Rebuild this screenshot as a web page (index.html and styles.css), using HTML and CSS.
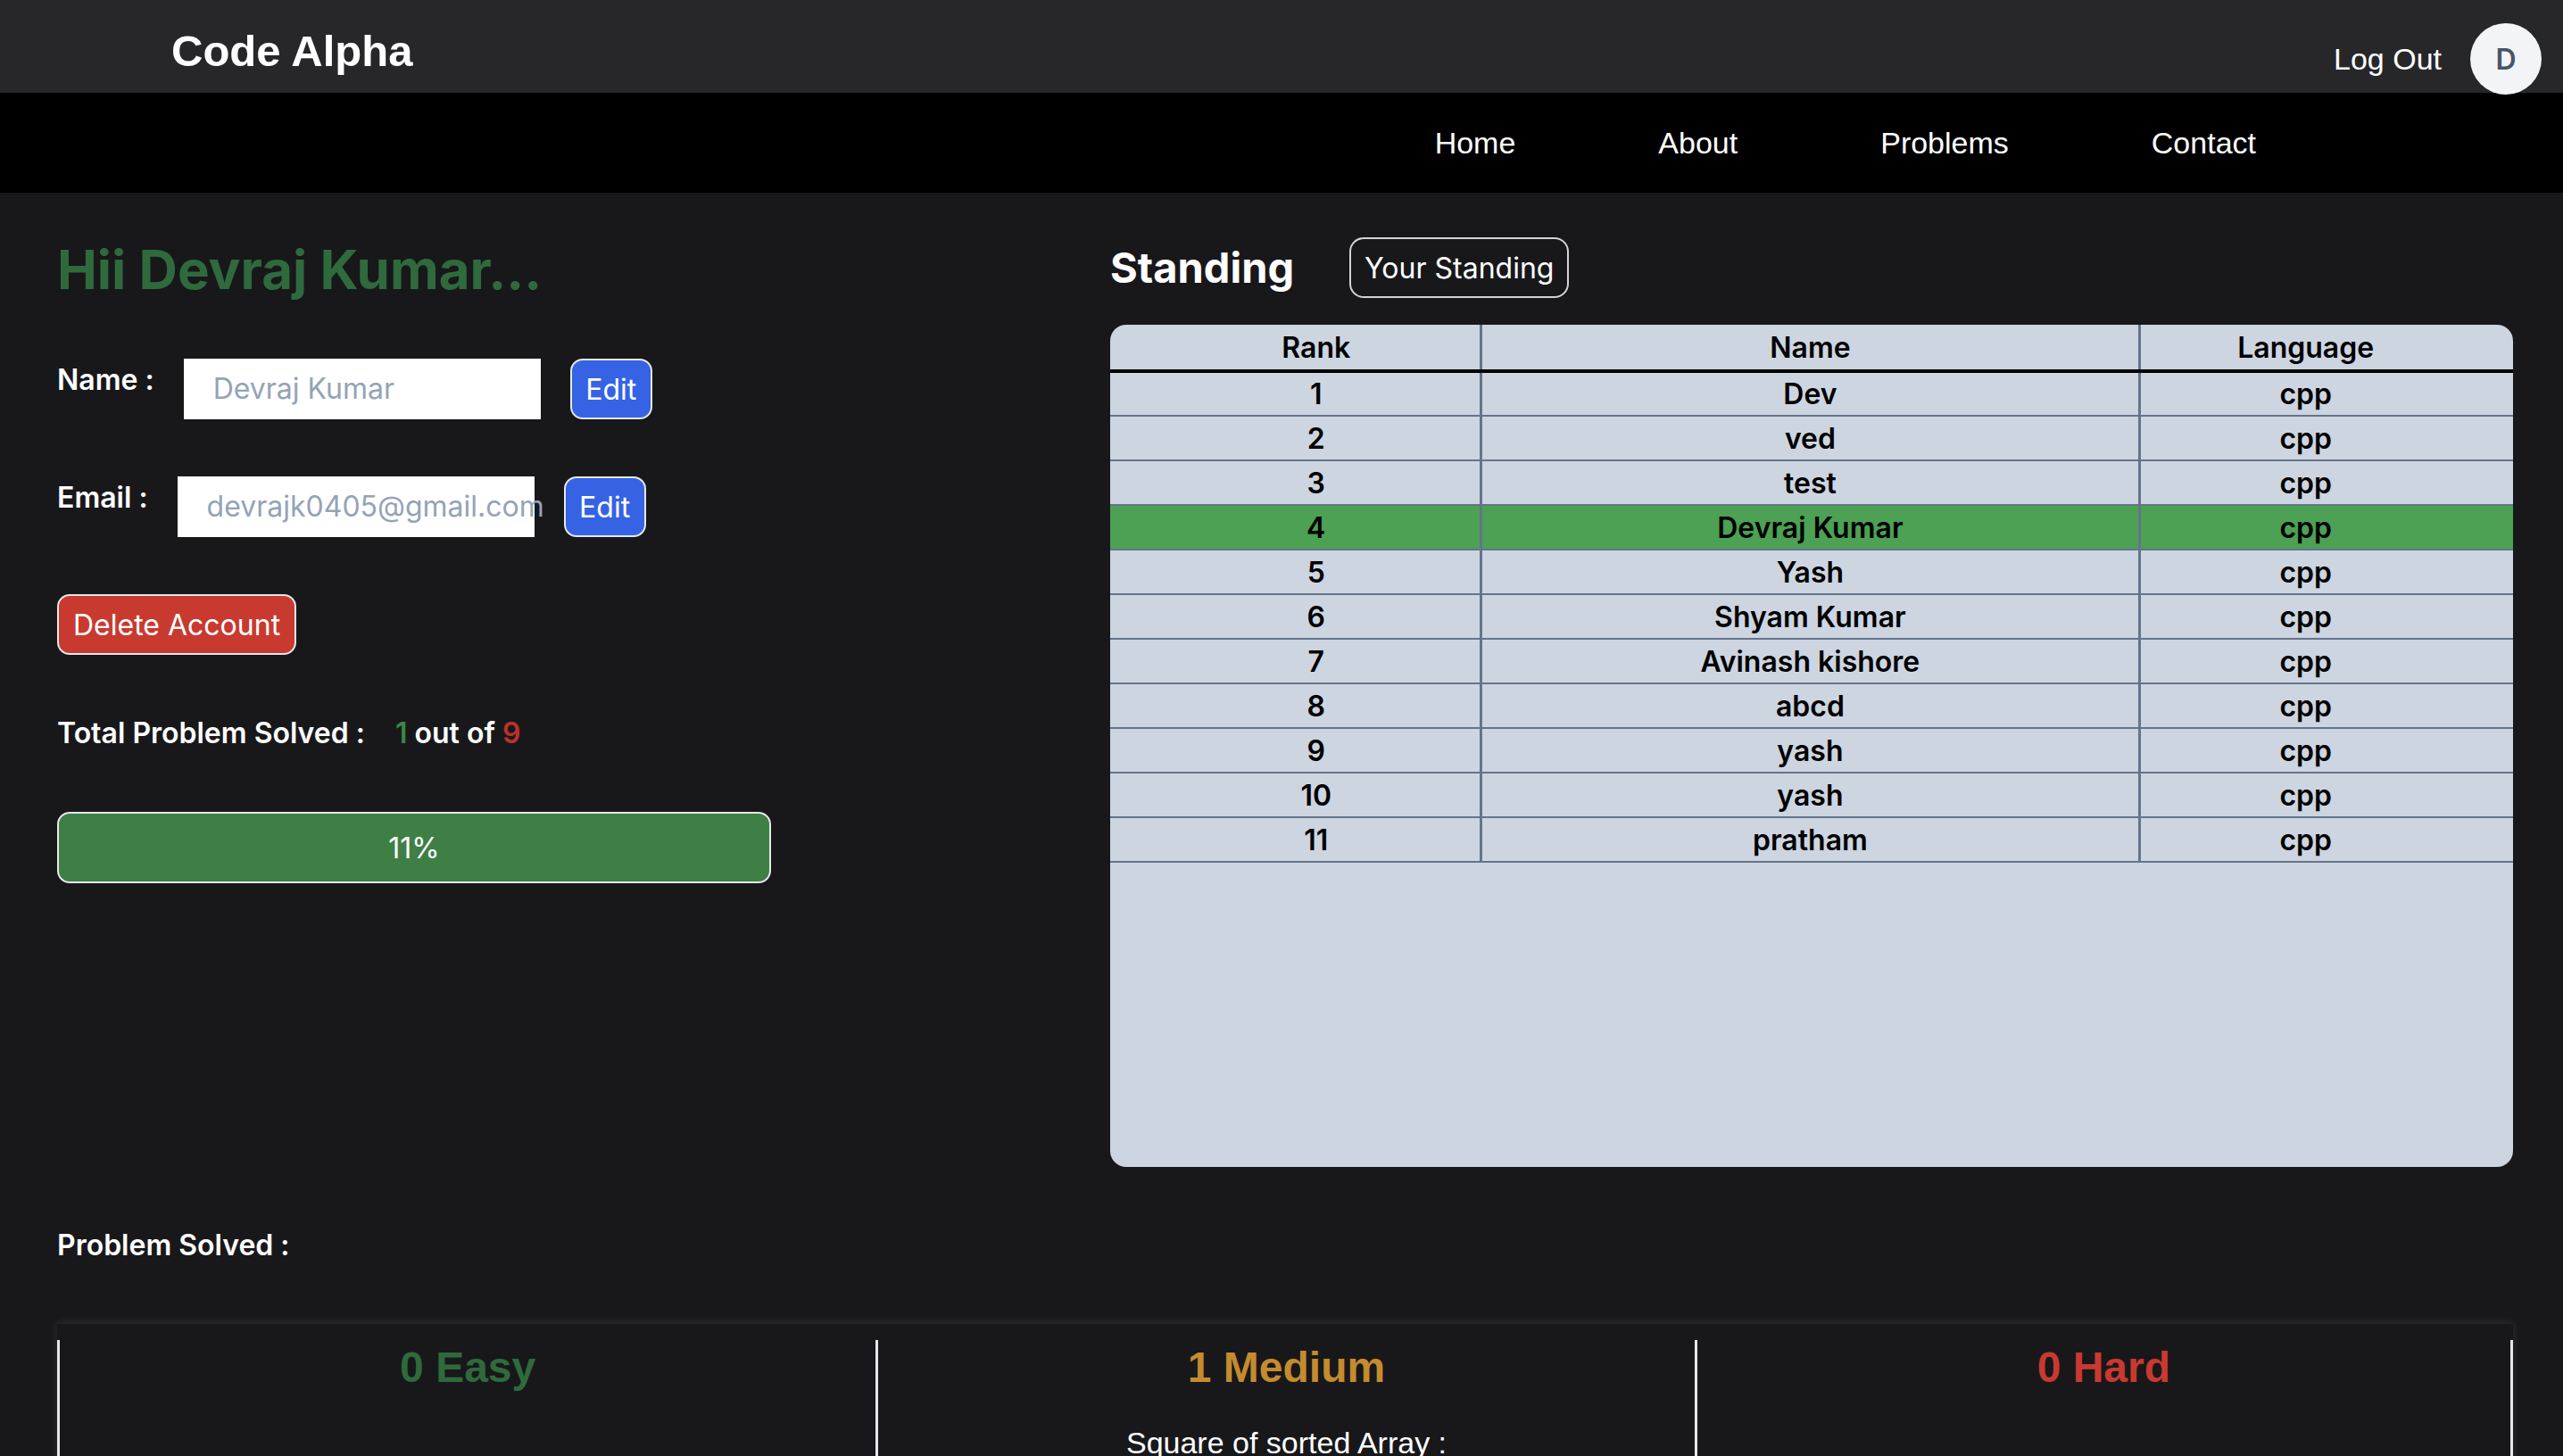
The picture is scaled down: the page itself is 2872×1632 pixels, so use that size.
FILE: index.html
```html
<!DOCTYPE html>
<html lang="en">
<head>
<meta charset="utf-8">
<title>Code Alpha - Profile</title>
<link rel="stylesheet" href="styles.css">
</head>
<body>
<header class="topbar">
  <div class="logo">Code Alpha</div>
  <div class="account">
    <span class="logout">Log Out</span>
    <span class="avatar">D</span>
  </div>
</header>
<nav class="navbar">
  <ul class="nav-list">
    <li>Home</li>
    <li>About</li>
    <li>Problems</li>
    <li>Contact</li>
  </ul>
</nav>
<main class="main">
  <section class="top">
    <div class="profile">
      <h1 class="greet">Hii Devraj Kumar...</h1>
      <div class="field-row">
        <span class="label">Name :</span>
        <div class="field">Devraj Kumar</div>
        <button class="btn-edit">Edit</button>
      </div>
      <div class="field-row">
        <span class="label">Email :</span>
        <div class="field">devrajk0405@gmail.com</div>
        <button class="btn-edit">Edit</button>
      </div>
      <div><button class="btn-delete">Delete Account</button></div>
      <div class="total"><span class="total-label">Total Problem Solved :</span><span class="num-green">1</span> out of <span class="num-red">9</span></div>
      <div class="progress">11%</div>
    </div>
    <div class="standing">
      <div class="standing-head">
        <h2 class="standing-title">Standing</h2>
        <button class="btn-outline">Your Standing</button>
      </div>
      <div class="table-box">
        <table class="rank-table">
          <thead>
            <tr><th class="c1">Rank</th><th class="c2">Name</th><th class="c3">Language</th></tr>
          </thead>
          <tbody>
            <tr><td>1</td><td>Dev</td><td>cpp</td></tr>
            <tr><td>2</td><td>ved</td><td>cpp</td></tr>
            <tr><td>3</td><td>test</td><td>cpp</td></tr>
            <tr class="me"><td>4</td><td>Devraj Kumar</td><td>cpp</td></tr>
            <tr><td>5</td><td>Yash</td><td>cpp</td></tr>
            <tr><td>6</td><td>Shyam Kumar</td><td>cpp</td></tr>
            <tr><td>7</td><td>Avinash kishore</td><td>cpp</td></tr>
            <tr><td>8</td><td>abcd</td><td>cpp</td></tr>
            <tr><td>9</td><td>yash</td><td>cpp</td></tr>
            <tr><td>10</td><td>yash</td><td>cpp</td></tr>
            <tr><td>11</td><td>pratham</td><td>cpp</td></tr>
          </tbody>
        </table>
      </div>
    </div>
  </section>
  <section class="solved">
    <div class="solved-title">Problem Solved :</div>
    <div class="cards">
      <div class="card">
        <div class="card-title easy">0 Easy</div>
      </div>
      <div class="card">
        <div class="card-title medium">1 Medium</div>
        <div class="card-item">Square of sorted Array :</div>
      </div>
      <div class="card last">
        <div class="card-title hard">0 Hard</div>
      </div>
    </div>
  </section>
</main>
</body>
</html>
```
FILE: styles.css
```css
* { box-sizing: border-box; }
html, body { margin: 0; padding: 0; }
body {
  background: #18181b;
  color: #ffffff;
  font-family: Inter, "Noto Sans", sans-serif;
  overflow: hidden;
  height: 1632px;
}

/* top header */
.topbar {
  height: 104px;
  background: #27272a;
  display: flex;
  justify-content: space-between;
  align-items: flex-start;
}
.logo {
  font-family: "Liberation Sans", Arial, sans-serif;
  font-weight: 700;
  font-size: 49px;
  line-height: 56px;
  padding: 29px 0 0 192px;
}
.account {
  display: flex;
  align-items: center;
  gap: 32px;
  padding: 26px 24px 0 0;
}
.logout {
  font-family: "Liberation Sans", Arial, sans-serif;
  font-size: 34px;
}
.avatar {
  width: 80px;
  height: 80px;
  border-radius: 50%;
  background: #f3f4f6;
  color: #475569;
  display: flex;
  align-items: center;
  justify-content: center;
  font-size: 32px;
  font-weight: 600;
  font-family: Inter, sans-serif;
}

/* navigation */
.navbar {
  height: 112px;
  background: #000000;
  display: flex;
  align-items: center;
  justify-content: flex-end;
  padding-right: 344px;
}
.nav-list {
  list-style: none;
  margin: 0;
  padding: 0;
  display: flex;
  gap: 160px;
  font-family: "Liberation Sans", Arial, sans-serif;
  font-size: 34px;
}

/* main */
.main {
  padding: 50px 56px 0 64px;
}
.top {
  display: grid;
  grid-template-columns: 1180px 1fr;
}
.profile {
  display: flex;
  flex-direction: column;
  gap: 64px;
}
.greet {
  margin: 0;
  font-size: 60px;
  line-height: 72px;
  font-weight: 700;
  color: #2f6a3d;
}
.field-row {
  display: flex;
  align-items: flex-start;
}
.label {
  font-size: 32px;
  font-weight: 600;
  line-height: 48px;
  margin-right: 33px;
}
.field {
  width: 400px;
  height: 68px;
  background: #ffffff;
  color: #94a3b8;
  font-size: 32px;
  line-height: 68px;
  padding-left: 33px;
  white-space: nowrap;
}
.btn-edit {
  margin-left: 33px;
  width: 92px;
  height: 68px;
  background: #3563e4;
  color: #ffffff;
  border: 2px solid #e5e7eb;
  border-radius: 14px;
  font-family: Inter, sans-serif;
  font-size: 32px;
  padding: 0;
}
.btn-delete {
  height: 68px;
  padding: 0 16px;
  background: #c83a30;
  color: #ffffff;
  border: 2px solid #e5e7eb;
  border-radius: 14px;
  font-family: Inter, sans-serif;
  font-size: 32px;
}
.total {
  font-size: 32px;
  font-weight: 600;
  line-height: 48px;
}
.total-label { margin-right: 34px; }
.num-green { color: #3d8546; }
.num-red { color: #b8322b; }
.progress {
  width: 800px;
  height: 80px;
  background: #3e7f46;
  border: 2px solid #e5e7eb;
  border-radius: 14px;
  display: flex;
  align-items: center;
  justify-content: center;
  font-size: 32px;
}

/* standing */
.standing-head {
  display: flex;
  align-items: center;
  height: 68px;
}
.standing-title {
  margin: 0;
  font-size: 47px;
  font-weight: 700;
  line-height: 64px;
}
.btn-outline {
  margin-left: 62px;
  height: 68px;
  padding: 0 15px;
  background: transparent;
  color: #ffffff;
  border: 2px solid #d4d4d8;
  border-radius: 16px;
  font-family: Inter, sans-serif;
  font-size: 32px;
}
.table-box {
  margin-top: 30px;
  height: 944px;
  background: #cdd5e1;
  border-radius: 18px;
  overflow: hidden;
}
.rank-table {
  width: 100%;
  border-collapse: collapse;
  color: #000000;
  font-size: 32px;
  font-weight: 600;
  text-align: center;
}
.rank-table th {
  height: 52px;
  font-weight: 600;
  border-bottom: 4px solid #000000;
  padding: 0;
}
.rank-table td {
  height: 50px;
  border-bottom: 2px solid #64748b;
  padding: 0;
}
.rank-table th + th,
.rank-table td + td {
  border-left: 3px solid #64748b;
}
.rank-table th:first-child,
.rank-table td:first-child { padding-left: 48px; }
.rank-table th:last-child,
.rank-table td:last-child { padding-right: 48px; }
.c1 { width: 26.4%; }
.c2 { width: 47%; }
.c3 { width: 26.6%; }
.rank-table tr.me td { background: #4ca154; }

/* problem solved */
.solved-title {
  margin-top: 64px;
  font-size: 32px;
  font-weight: 600;
  line-height: 48px;
}
.cards {
  margin-top: 62px;
  padding-top: 18px;
  display: grid;
  grid-template-columns: repeat(3, 1fr);
  box-shadow: 0 0 10px rgba(255, 255, 255, 0.1);
  border-top: 2px solid #232326;
  min-height: 400px;
}
.card {
  border-left: 3px solid #e5e7eb;
  text-align: center;
  font-family: "Liberation Sans", Arial, sans-serif;
}
.card.last { border-right: 3px solid #e5e7eb; }
.card-title {
  font-size: 48px;
  font-weight: 700;
  line-height: 62px;
}
.easy { color: #2f6a3d; }
.medium { color: #c48b2f; }
.hard { color: #c83a30; }
.card-item {
  margin-top: 29px;
  font-size: 34px;
  line-height: 48px;
}
```
